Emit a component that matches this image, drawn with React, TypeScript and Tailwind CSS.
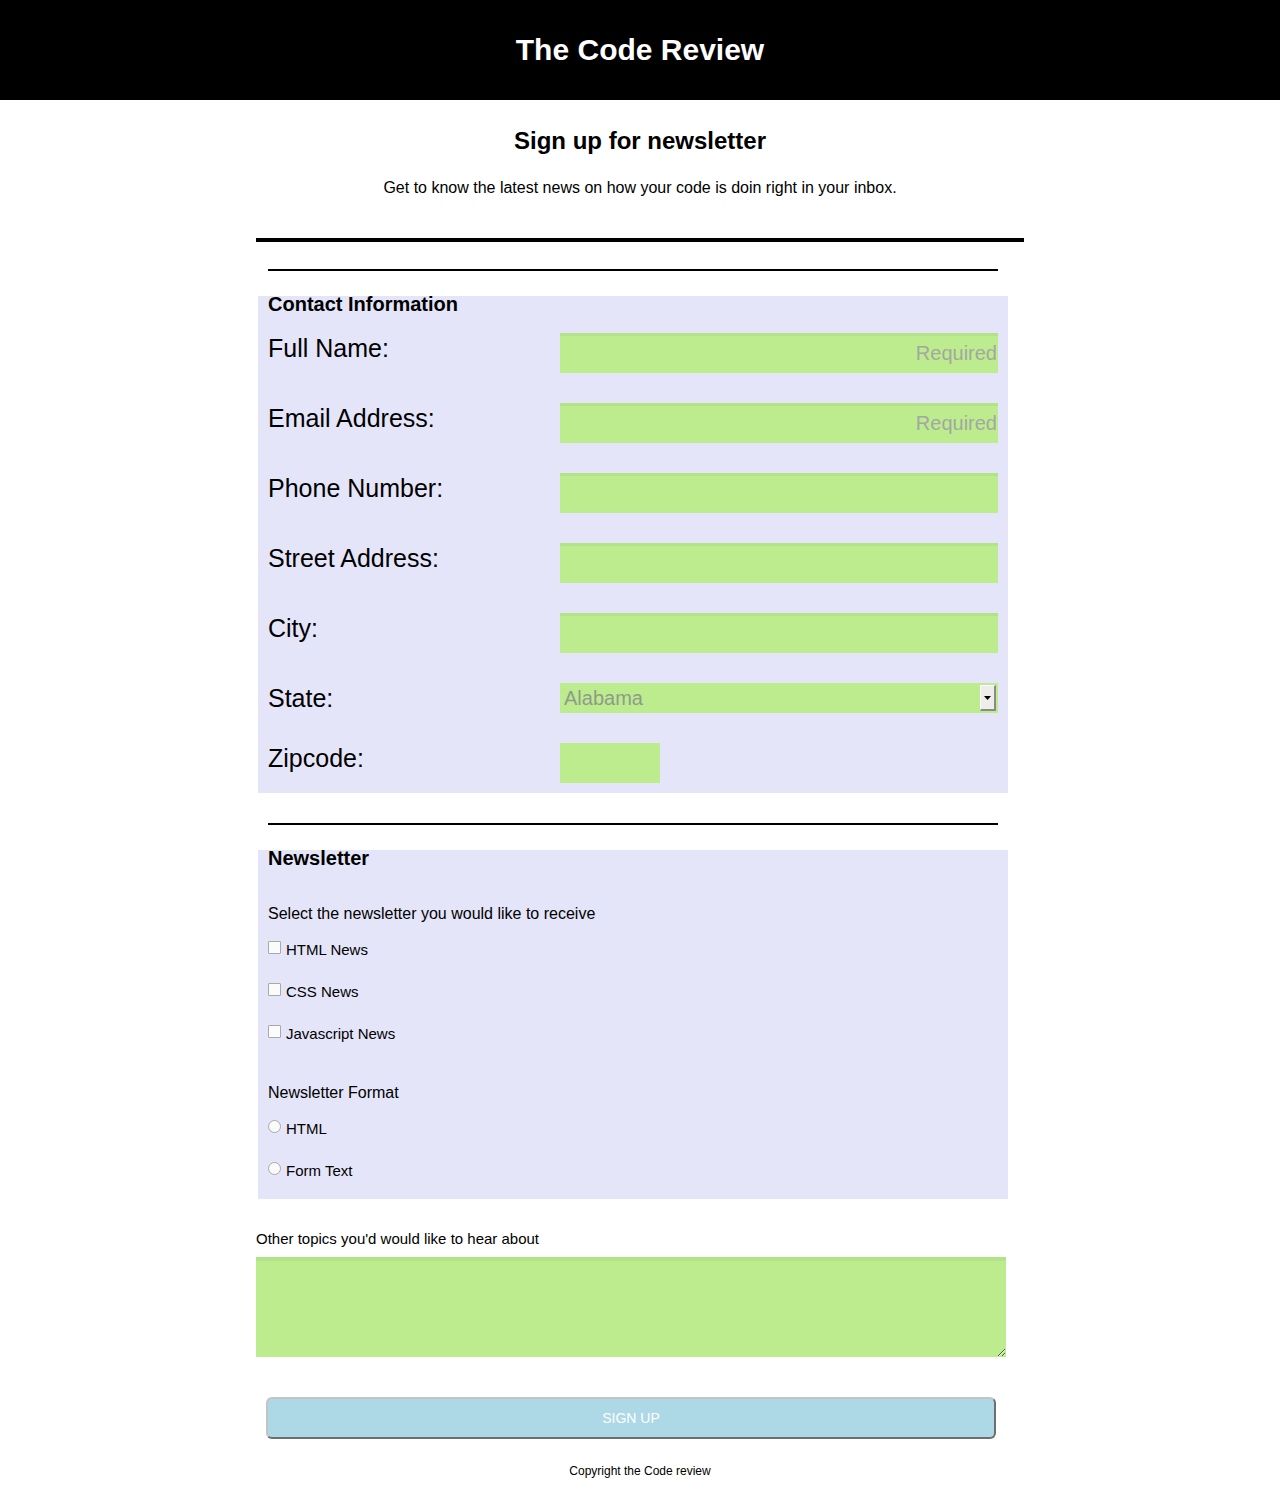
import React from "react";

const font = { fontFamily: '"Liberation Sans", Arial, sans-serif' };

const states = ["Alabama", "Alaska", "Arizona", "Arkansas", "California"];

interface RowProps {
  label: string;
  children: React.ReactNode;
}

const Row: React.FC<RowProps> = ({ label, children }) => (
  <div className="flex items-start">
    <label className="w-[292px] text-[25px] leading-[29px] mt-[1px] text-black">{label}</label>
    {children}
  </div>
);

const TextInput: React.FC<{ required?: boolean }> = ({ required }) => (
  <input
    type="text"
    placeholder={required ? "Required" : ""}
    className="w-[438px] h-[40px] bg-[#bdec8f] border-t-[3px] border-[#b4e289] text-right text-[20px] pr-[1px] pb-[2px] outline-none placeholder:text-[#a3a8a0]"
  />
);

export default function App() {
  return (
    <div className="min-h-[1499px] bg-white text-black" style={font}>
      {/* Header */}
      <header className="h-[100px] bg-black flex items-center justify-center">
        <h1 className="text-[30px] font-bold text-white leading-[34px]">The Code Review</h1>
      </header>

      <main className="w-[768px] mx-auto">
        <h2 className="mt-[27px] text-[24px] leading-[28px] font-bold text-center">Sign up for newsletter</h2>
        <p className="mt-[24px] text-[16px] leading-[18px] text-center">
          Get to know the latest news on how your code is doin right in your inbox.
        </p>
        <div className="mt-[41px] h-[4px] bg-black"></div>

        {/* Contact Information */}
        <section className="w-[750px] ml-[2px]">
          <div className="mt-[27px] mx-[10px] h-[2px] bg-black"></div>
          <div className="mt-[25px] bg-[#e5e5f9] px-[10px] pb-[10px]">
            <h3 className="text-[20px] leading-[16px] font-bold">Contact Information</h3>
            <div className="mt-[21px] flex flex-col gap-[30px]">
              <Row label="Full Name:">
                <TextInput required />
              </Row>
              <Row label="Email Address:">
                <TextInput required />
              </Row>
              <Row label="Phone Number:">
                <TextInput />
              </Row>
              <Row label="Street Address:">
                <TextInput />
              </Row>
              <Row label="City:">
                <TextInput />
              </Row>
              <Row label="State:">
                <div className="relative w-[438px] h-[30px]">
                  <select className="appearance-none w-full h-full bg-[#bdec8f] text-[20px] text-[#8f9b89] pl-[4px] outline-none">
                    {states.map((s) => (
                      <option key={s}>{s}</option>
                    ))}
                  </select>
                  <div className="pointer-events-none absolute right-[2px] top-[2px] w-[16px] h-[26px] bg-[#efedea] border-t border-l border-t-white border-l-white border-r-2 border-b-2 border-r-[#8a8a8a] border-b-[#8a8a8a] flex items-center justify-center">
                    <svg width="7" height="4" viewBox="0 0 7 4">
                      <path d="M0 0h7L3.5 4z" fill="#000" />
                    </svg>
                  </div>
                </div>
              </Row>
              <Row label="Zipcode:">
                <input type="text" className="w-[100px] h-[40px] bg-[#bdec8f] outline-none" />
              </Row>
            </div>
          </div>
        </section>

        {/* Newsletter */}
        <section className="w-[750px] ml-[2px]">
          <div className="mt-[30px] mx-[10px] h-[2px] bg-black"></div>
          <div className="mt-[25px] bg-[#e5e5f9] px-[10px] pb-[20px]">
            <h3 className="text-[20px] leading-[16px] font-bold">Newsletter</h3>
            <p className="mt-[39px] text-[16px] leading-[18px]">Select the newsletter you would like to receive</p>
            <div className="mt-[18px] flex flex-col gap-[25px]">
              {["HTML News", "CSS News", "Javascript News"].map((n) => (
                <label key={n} className="flex items-start text-[15px] leading-[17px]">
                  <input
                    type="checkbox"
                    className="appearance-none w-[13px] h-[13px] mr-[5px] border border-[#a9a9a9] bg-[#fbfbfb] rounded-[1px]"
                  />
                  {n}
                </label>
              ))}
            </div>
            <p className="mt-[42px] text-[16px] leading-[18px]">Newsletter Format</p>
            <div className="mt-[18px] flex flex-col gap-[25px]">
              {["HTML", "Form Text"].map((n) => (
                <label key={n} className="flex items-start text-[15px] leading-[17px]">
                  <input
                    type="radio"
                    name="format"
                    className="appearance-none w-[13px] h-[13px] mr-[5px] rounded-full border border-[#a9a9a9] bg-[#fbfbfb]"
                  />
                  {n}
                </label>
              ))}
            </div>
          </div>
        </section>

        <p className="mt-[31px] text-[15px] leading-[17px]">Other topics you'd would like to hear about</p>
        <textarea className="block mt-[10px] w-[750px] h-[100px] bg-[#bdec8f] border-t-[4px] border-[#b4e289] outline-none"></textarea>

        <button className="block mt-[40px] ml-[10px] w-[730px] h-[42px] rounded-[6px] bg-[#add8e6] border-2 border-t-[#c4c4c4] border-l-[#c4c4c4] border-r-[#6e6e6e] border-b-[#6e6e6e] text-white text-[14px]">
          SIGN UP
        </button>

        <footer className="mt-[25px] pb-[21px] text-center text-[12px] leading-[14px]">Copyright the Code review</footer>
      </main>
    </div>
  );
}
